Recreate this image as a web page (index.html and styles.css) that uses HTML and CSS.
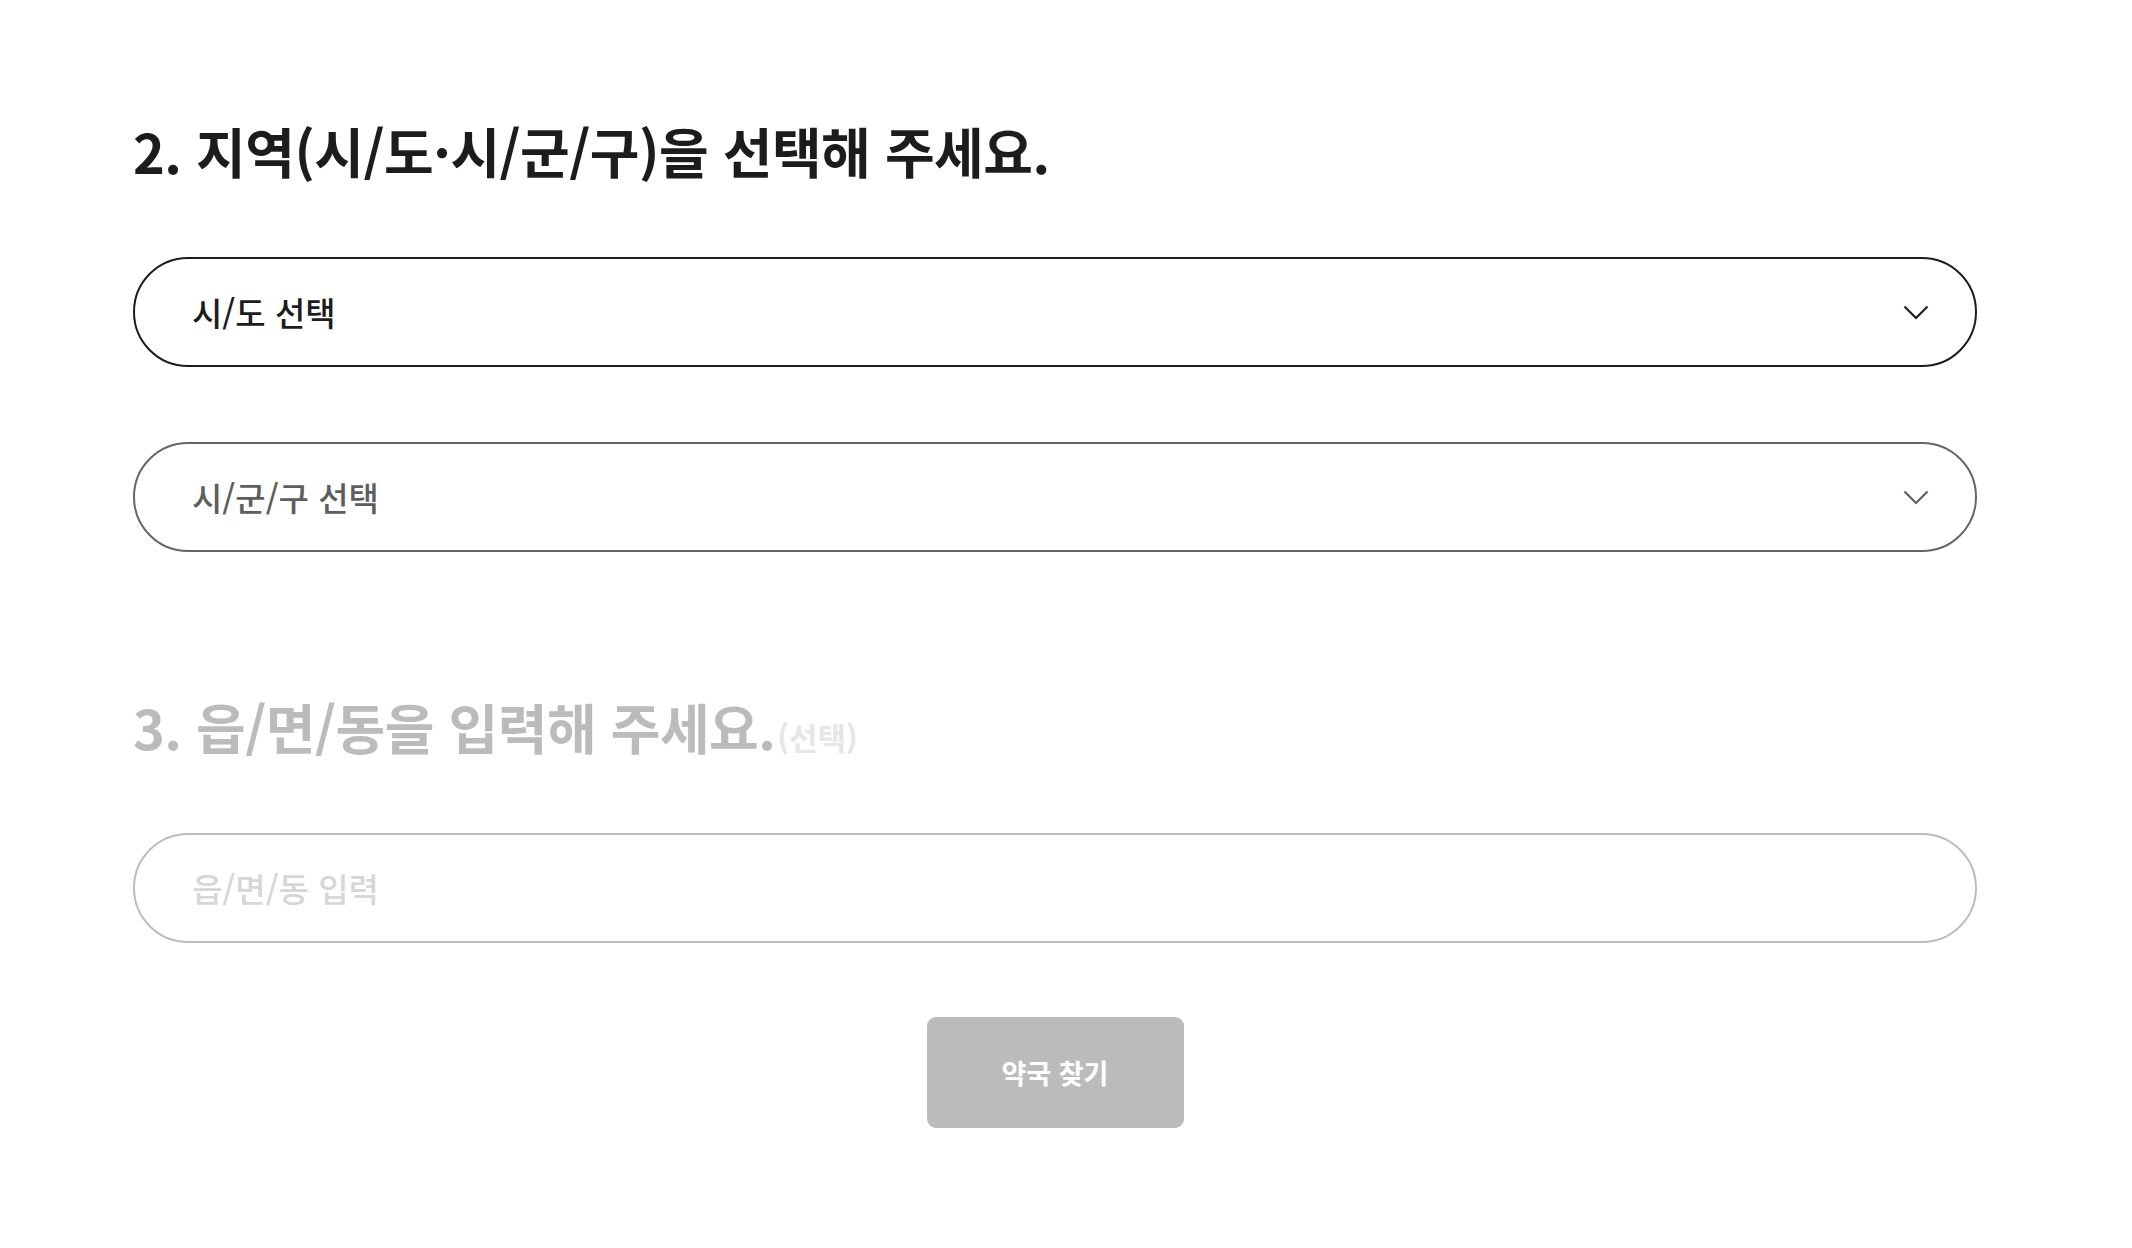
FILE: index.html
```html
<!DOCTYPE html>
<html lang="ko">
<head>
<meta charset="utf-8">
<title>약국 찾기</title>
<link rel="stylesheet" href="styles.css">
</head>
<body>
<main class="page">
  <section class="step">
    <h2 class="step-title">2. 지역(시/도·시/군/구)을 선택해 주세요.</h2>
    <div class="select select-active">
      <span class="select-label">시/도 선택</span>
      <svg class="chevron" width="26" height="15" viewBox="0 0 26 15"><polyline points="1.5,1.5 13,13 24.5,1.5" fill="none" stroke="currentColor" stroke-width="2.2"/></svg>
    </div>
    <div class="select select-idle">
      <span class="select-label">시/군/구 선택</span>
      <svg class="chevron" width="26" height="15" viewBox="0 0 26 15"><polyline points="1.5,1.5 13,13 24.5,1.5" fill="none" stroke="currentColor" stroke-width="2.2"/></svg>
    </div>
  </section>
  <section class="step step-disabled">
    <h2 class="step-title">3. 읍/면/동을 입력해 주세요.<span class="optional">(선택)</span></h2>
    <input class="text-input" type="text" placeholder="읍/면/동 입력">
  </section>
  <div class="actions">
    <button class="search-btn" type="button">약국 찾기</button>
  </div>
</main>
</body>
</html>
```

FILE: styles.css
```css
html, body {
  margin: 0;
  padding: 0;
  background: #ffffff;
}

body {
  font-family: "Noto Sans CJK KR", "Noto Sans", sans-serif;
}

.page {
  width: 1844px;
  margin-left: 133px;
  padding-top: 120px;
}

.step-title {
  margin: 0;
  font-size: 54px;
  line-height: 62px;
  font-weight: 700;
  letter-spacing: -0.5px;
  color: #1c1c1c;
}

.select {
  box-sizing: border-box;
  height: 110px;
  margin-top: 75px;
  border-radius: 55px;
  display: flex;
  align-items: center;
  justify-content: space-between;
  padding: 0 46px 0 57px;
}

.select + .select {
  margin-top: 75px;
}

.select-label {
  font-size: 33px;
  font-weight: 500;
}

.select-active {
  border: 2px solid #1c1c1c;
  color: #1c1c1c;
}

.select-idle {
  border: 2px solid #666666;
  color: #5e5e5e;
}

.chevron {
  display: block;
}

.step-disabled {
  margin-top: 144px;
}

.step-disabled .step-title {
  color: #bbbbbb;
}

.optional {
  font-size: 31px;
  color: #e6e6e6;
  letter-spacing: 0;
  margin-left: 2px;
}

.text-input {
  display: block;
  box-sizing: border-box;
  width: 100%;
  height: 110px;
  margin-top: 65px;
  border: 2px solid #bdbdbd;
  border-radius: 55px;
  padding: 0 57px;
  font-family: "Noto Sans CJK KR", "Noto Sans", sans-serif;
  font-size: 33px;
  font-weight: 500;
  color: #1c1c1c;
  background: #ffffff;
  outline: none;
}

.text-input::placeholder {
  color: #d6d6d6;
}

.actions {
  display: flex;
  justify-content: center;
  margin-top: 74px;
}

.search-btn {
  width: 257px;
  height: 111px;
  border: none;
  border-radius: 9px;
  background: #bbbbbb;
  color: #ffffff;
  font-family: "Noto Sans CJK KR", "Noto Sans", sans-serif;
  font-size: 27px;
  font-weight: 700;
  padding: 0;
}
```
